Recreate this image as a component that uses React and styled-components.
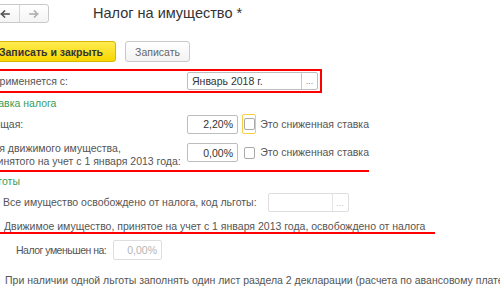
import styled, { createGlobalStyle } from "styled-components";

const GlobalStyle = createGlobalStyle`
    html, body {
        margin: 0;
        background: #fff;
        overflow: hidden;
    }
    body {
        font-family: "Liberation Sans", Arial, sans-serif;
        font-size: 10.5px;
        color: #555;
    }
`;

const Page = styled.div`
    width: 640px;
    margin-left: -14px;
`;

const Header = styled.div`
    display: flex;
    align-items: center;
    margin-top: 4px;
    padding-left: 4px;
    height: 19px;
`;

const NavGroup = styled.div`
    display: flex;
    height: 19px;
    border: 1px solid #c9c9c9;
    border-radius: 3px;
    box-sizing: border-box;
    background: linear-gradient(#fff, #f4f4f4);
`;

const NavButton = styled.div`
    width: 28px;
    display: flex;
    align-items: center;
    justify-content: center;
    & + & {
        border-left: 1px solid #d6d6d6;
    }
`;

const Title = styled.h1`
    margin: 0 0 0 44px;
    font-size: 14.5px;
    font-weight: normal;
    color: #333;
    line-height: 19px;
`;

const CommandBar = styled.div`
    display: flex;
    gap: 9px;
    margin-top: 18px;
`;

const Button = styled.div`
    height: 21px;
    box-sizing: border-box;
    display: flex;
    align-items: center;
    white-space: nowrap;
    padding: 0 ${p => (p.$primary ? "12px" : "10px")};
    border-radius: 3px;
    border: 1px solid ${p => (p.$primary ? "#d7b600" : "#c9c9c9")};
    background: ${p => (p.$primary
        ? "linear-gradient(#ffec52, #f7d600)"
        : "linear-gradient(#fff, #f3f3f3)")};
    color: ${p => (p.$primary ? "#333" : "#666")};
    font-weight: ${p => (p.$primary ? "bold" : "normal")};
    width: ${p => (p.$primary ? "130px" : "65px")};
    justify-content: ${p => (p.$primary ? "flex-end" : "center")};
`;

const HighlightRow = styled.div`
    display: flex;
    align-items: center;
    width: 336px;
    height: 24px;
    box-sizing: border-box;
    margin-top: 7px;
    border: 2px solid #f00;
    padding-left: 4px;
`;

const Label = styled.div`
    width: ${p => p.$width || 201}px;
    flex-shrink: 0;
    line-height: 13px;
    color: #555;
    white-space: nowrap;
`;

const Field = styled.div`
    display: flex;
    align-items: stretch;
    width: ${p => p.$width}px;
    height: ${p => p.$height || 19}px;
    margin-top: ${p => p.$offset || 0}px;
    margin-left: ${p => p.$left || 0}px;
    box-sizing: border-box;
    border: 1px solid ${p => (p.$disabled ? "#dedede" : "#bdbdbd")};
    border-radius: 2px;
    background: #fff;
    flex-shrink: 0;
`;

const FieldValue = styled.div`
    flex: 1;
    display: flex;
    align-items: center;
    justify-content: ${p => (p.$right ? "flex-end" : "flex-start")};
    padding: 0 4px;
    color: ${p => (p.$disabled ? "#b5b5b5" : "#333")};
`;

const PickButton = styled.div`
    width: 16px;
    border-left: 1px solid ${p => (p.$disabled ? "#e4e4e4" : "#c9c9c9")};
    color: ${p => (p.$disabled ? "#c2c2c2" : "#888")};
    font-size: 9px;
    display: flex;
    align-items: flex-end;
    justify-content: center;
    padding-bottom: 3px;
    box-sizing: border-box;
`;

const SectionTitle = styled.div`
    color: #3a9d5a;
    line-height: 13px;
    margin-top: ${p => p.$offset}px;
`;

const RateGroup = styled.div`
    width: 383px;
    padding-bottom: 2px;
    border-bottom: 2px solid #f00;
`;

const Row = styled.div`
    display: flex;
    align-items: ${p => (p.$top ? "flex-start" : "center")};
    margin-top: ${p => p.$offset}px;
`;

const ReductionRow = styled.div`
    display: flex;
    align-items: center;
    margin-top: 6px;
    padding-left: 30px;
`;

const ReductionLabel = styled.span`
    width: 97px;
    flex-shrink: 0;
    white-space: nowrap;
    letter-spacing: -0.5px;
    color: #555;
`;

const CheckFrame = styled.div`
    width: 16px;
    height: 20px;
    box-sizing: border-box;
    margin-left: 4px;
    border: 1px solid ${p => (p.$focused ? "#f6cf45" : "transparent")};
    border-radius: 2px;
    display: flex;
    align-items: center;
    justify-content: center;
    align-self: ${p => (p.$top ? "flex-start" : "auto")};
    margin-top: ${p => p.$offset || 0}px;
`;

const Box = styled.div`
    width: 11px;
    height: 12px;
    box-sizing: border-box;
    border: 1px solid #a9a9a9;
    border-radius: 2px;
    background: #fff;
    flex-shrink: 0;
`;

const CheckText = styled.span`
    margin-left: ${p => p.$gap || 4}px;
    color: #555;
    white-space: nowrap;
    line-height: ${p => p.$lh || 13}px;
    align-self: ${p => (p.$top ? "flex-start" : "auto")};
    margin-top: ${p => p.$offset || 0}px;
`;

const MarkedLine = styled.div`
    display: inline-flex;
    align-items: center;
    padding-left: 1px;
    padding-right: 10px;
    border-bottom: 2px solid #f00;
    line-height: 12px;
`;

const Note = styled.div`
    margin-top: 14px;
    padding-left: 19px;
    line-height: 13px;
    white-space: nowrap;
    color: #555;
`;

function Arrow({ dir, color }) {
    return (
        <svg width="10" height="8" viewBox="0 0 10 8">
            <g transform={dir === "right" ? "translate(10 0) scale(-1 1)" : undefined}
               fill="none" stroke={color} strokeWidth="1.6" strokeLinecap="square">
                <path d="M1.5 4 H9" />
                <path d="M4.5 1 L1.5 4 L4.5 7" />
            </g>
        </svg>
    );
}

function Checkbox({ focused, top, offset }) {
    return (
        <CheckFrame $focused={focused} $top={top} $offset={offset}>
            <Box />
        </CheckFrame>
    );
}

export default function App() {
    return (
        <Page>
            <GlobalStyle />
            <Header>
                <NavGroup>
                    <NavButton><Arrow dir="left" color="#555" /></NavButton>
                    <NavButton><Arrow dir="right" color="#b0b0b0" /></NavButton>
                </NavGroup>
                <Title>Налог на имущество *</Title>
            </Header>

            <CommandBar>
                <Button $primary>Записать и закрыть</Button>
                <Button>Записать</Button>
            </CommandBar>

            <HighlightRow>
                <Label $width={195}>Применяется с:</Label>
                <Field $width={131} $height={18}>
                    <FieldValue>Январь 2018 г.</FieldValue>
                    <PickButton>...</PickButton>
                </Field>
            </HighlightRow>

            <RateGroup>
                <SectionTitle $offset={4}>Ставка налога</SectionTitle>
                <Row $offset={4}>
                    <Label>Общая:</Label>
                    <Field $width={51}>
                        <FieldValue $right>2,20%</FieldValue>
                    </Field>
                    <Checkbox focused />
                    <CheckText>Это сниженная ставка</CheckText>
                </Row>
                <Row $offset={8} $top>
                    <Label>
                        Для движимого имущества,<br />
                        принятого на учет с 1 января 2013 года:
                    </Label>
                    <Field $width={51} $offset={1}>
                        <FieldValue $right>0,00%</FieldValue>
                    </Field>
                    <Checkbox top offset={1} />
                    <CheckText $top $offset={4}>Это сниженная ставка</CheckText>
                </Row>
            </RateGroup>

            <SectionTitle $offset={3}>Льготы</SectionTitle>
            <Row $offset={5}>
                <Box />
                <CheckText $gap={6}>Все имущество освобождено от налога, код льготы:</CheckText>
                <Field $width={81} $left={11} $disabled>
                    <FieldValue />
                    <PickButton $disabled>...</PickButton>
                </Field>
            </Row>
            <Row $offset={8}>
                <MarkedLine>
                    <Box />
                    <CheckText $gap={6} $lh={12}>
                        Движимое имущество, принятое на учет с 1 января 2013 года, освобождено от налога
                    </CheckText>
                </MarkedLine>
            </Row>
            <ReductionRow>
                <ReductionLabel>Налог уменьшен на:</ReductionLabel>
                <Field $width={49} $height={20} $disabled>
                    <FieldValue $right $disabled>0,00%</FieldValue>
                </Field>
            </ReductionRow>
            <Note>
                При наличии одной льготы заполнять один лист раздела 2 декларации (расчета по авансовому платежу)
            </Note>
        </Page>
    );
}
